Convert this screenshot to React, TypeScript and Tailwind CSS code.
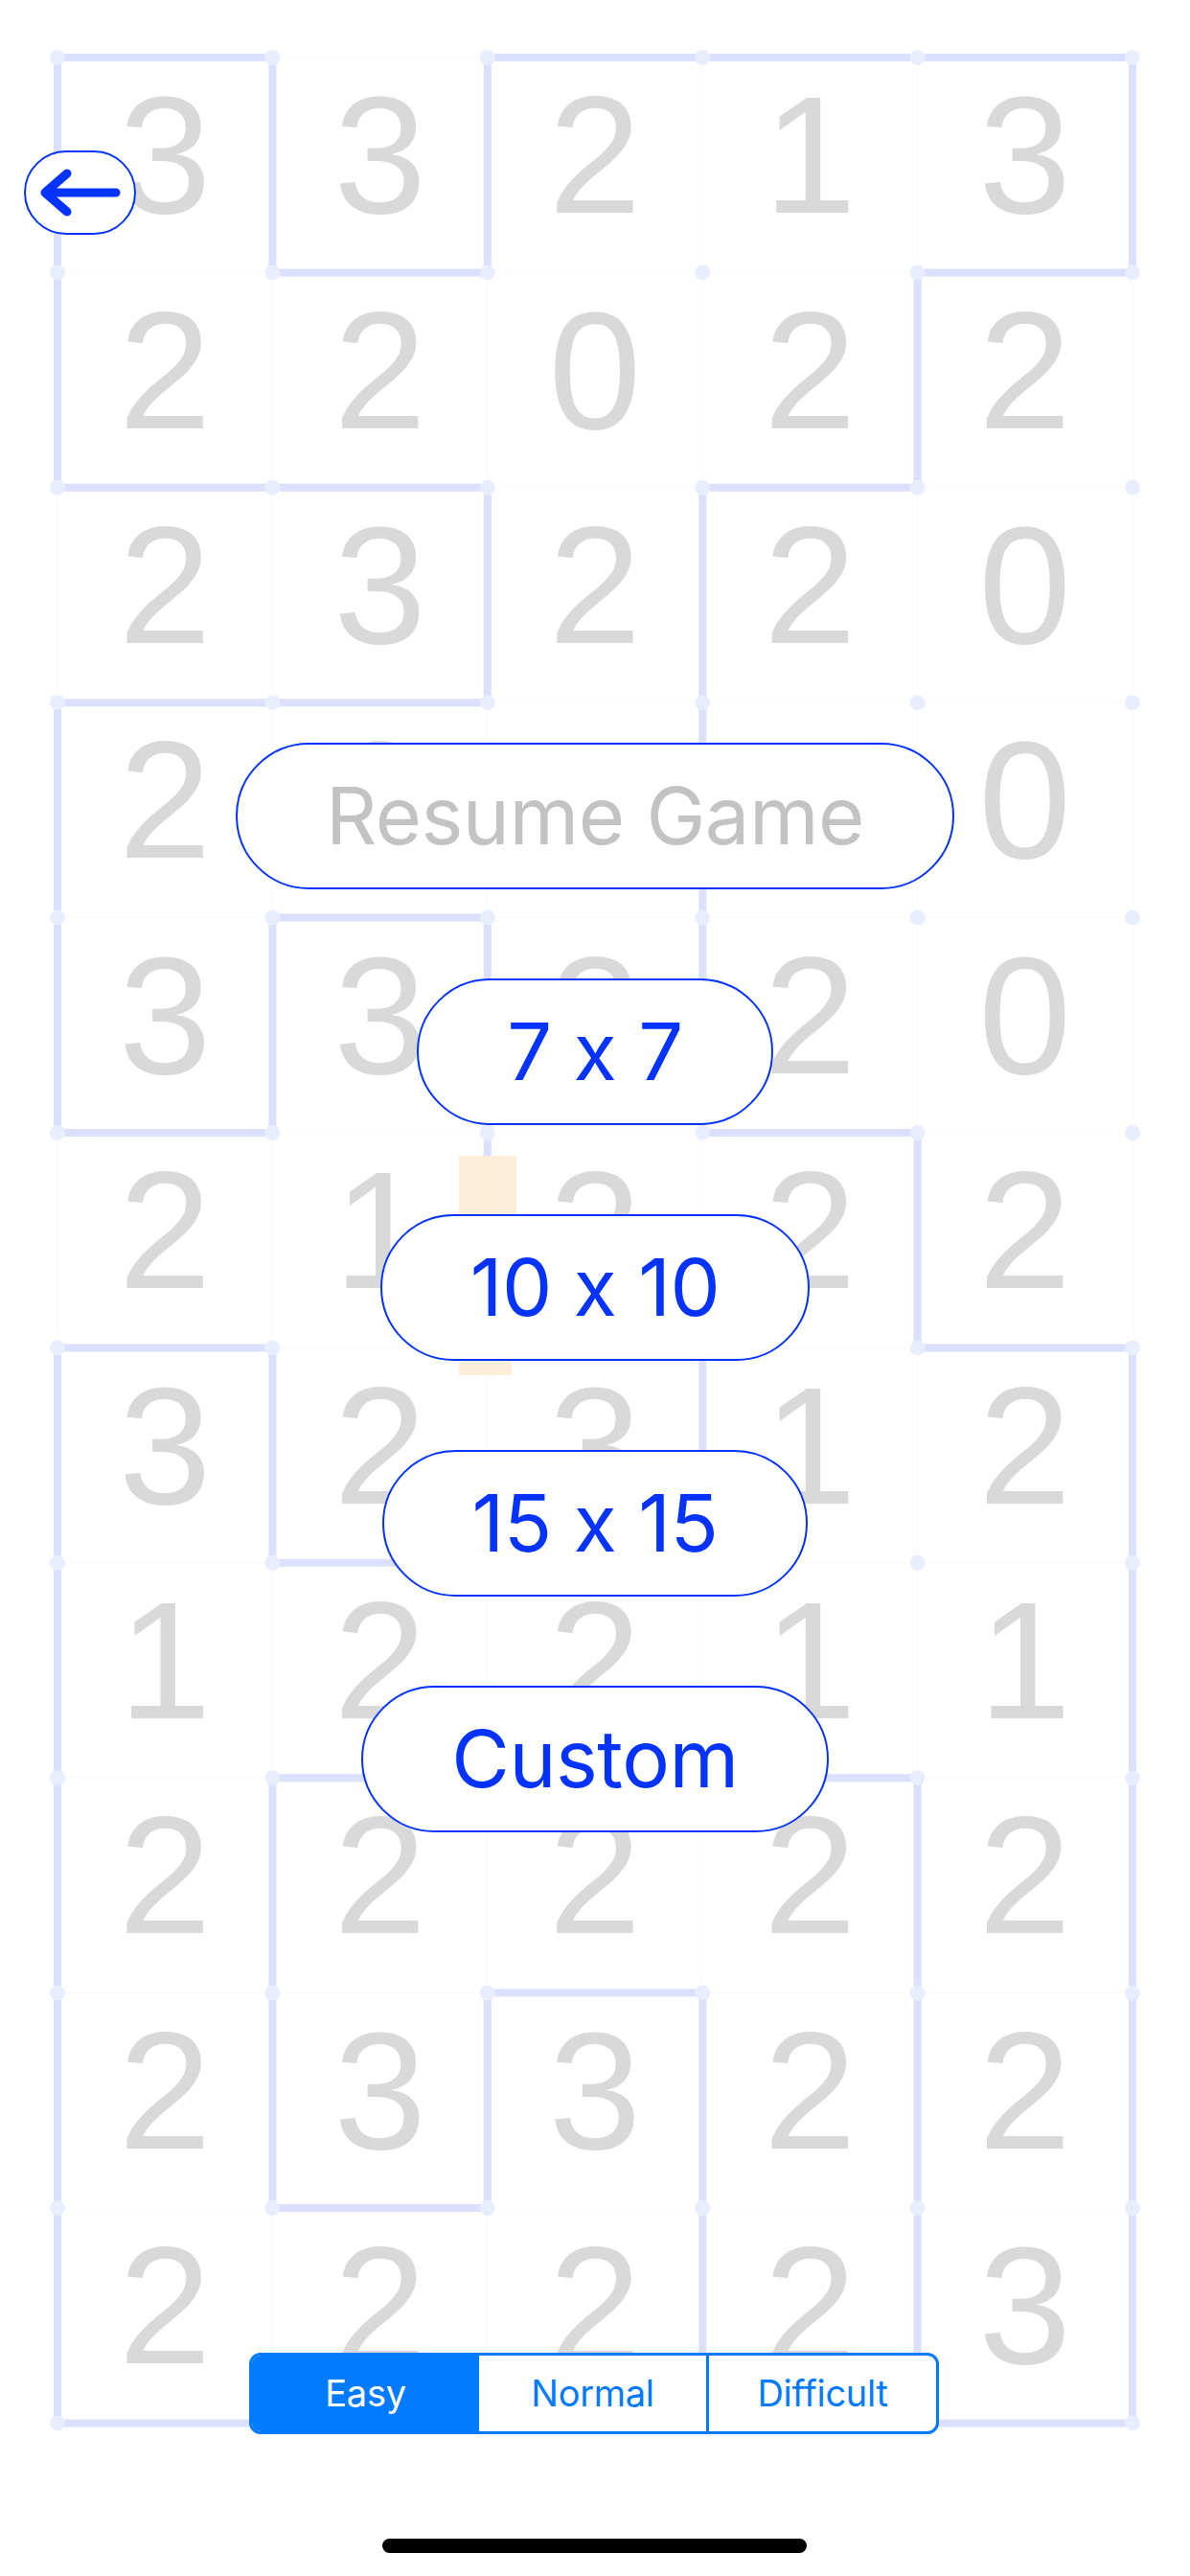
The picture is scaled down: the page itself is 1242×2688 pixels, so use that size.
import React from "react";

const S = 224.4;

const CLUES = [
  "33213",
  "22022",
  "23220",
  "22110",
  "33220",
  "21222",
  "32312",
  "12211",
  "22222",
  "23322",
  "22223",
];

// solved loop, as [col, row] vertices
const LOOP: [number, number][] = [
  [0, 0], [1, 0], [1, 1], [2, 1], [2, 0], [5, 0], [5, 1], [4, 1], [4, 2], [3, 2],
  [3, 5], [4, 5], [4, 6], [5, 6], [5, 11], [4, 11], [4, 8], [1, 8], [1, 10], [2, 10],
  [2, 9], [3, 9], [3, 11], [0, 11], [0, 6], [1, 6], [1, 7], [3, 7], [3, 6], [2, 6],
  [2, 4], [1, 4], [1, 5], [0, 5], [0, 3], [2, 3], [2, 2], [0, 2],
];

function BoardLines() {
  const cols = [0, 1, 2, 3, 4, 5];
  const rows = Array.from({ length: 12 }, (_, i) => i);
  const pts = LOOP.map(([c, r]) => `${c * S},${r * S}`).join(" ");
  return (
    <svg
      className="absolute left-0 top-0 overflow-visible"
      width={5 * S}
      height={11 * S}
      viewBox={`0 0 ${5 * S} ${11 * S}`}
    >
      {cols.map((c) => (
        <line key={"v" + c} x1={c * S} y1={0} x2={c * S} y2={11 * S} stroke="#fafafa" strokeWidth={1} />
      ))}
      {rows.map((r) => (
        <line key={"h" + r} x1={0} y1={r * S} x2={5 * S} y2={r * S} stroke="#fafafa" strokeWidth={1} />
      ))}
      <polygon points={pts} fill="none" stroke="#dae0fd" strokeWidth={8} strokeLinejoin="miter" />
      {rows.map((r) =>
        cols.map((c) => <ellipse key={`d${r}-${c}`} cx={c * S} cy={r * S} rx={8} ry={8} fill="#e8eefd" />)
      )}
      {/* highlighted edge */}
      <rect x={419} y={1146} width={60} height={170} fill="#feedd9" />
      <rect x={419} y={1316} width={55} height={59} fill="#feedd9" />
    </svg>
  );
}

function Board() {
  return (
    <div className="relative w-[1122px] h-[2468.4px]">
      <BoardLines />
      <div className="relative grid grid-cols-[repeat(5,224.4px)] grid-rows-[repeat(11,224.4px)]">
        {CLUES.map((row, r) =>
          row.split("").map((n, c) => (
            <div
              key={`${r}-${c}`}
              className="flex items-center justify-center pb-[20px] text-[174px] leading-none text-[#d9d9d9] font-['Liberation_Sans',sans-serif]"
            >
              {n}
            </div>
          ))
        )}
      </div>
    </div>
  );
}

function MenuButton({ label, muted }: { label: string; muted?: boolean }) {
  return (
    <button
      className={
        "h-[153px] px-[92px] rounded-full border-[2.5px] border-[#0433ff] bg-white text-[83px] leading-none tracking-[-0.5px] font-['Inter',sans-serif] [font-feature-settings:'calt'_0] " +
        (muted ? "text-[#c3c3c3]" : "text-[#0433ff]")
      }
    >
      {label}
    </button>
  );
}

export default function App() {
  return (
    <div className="relative w-[1242px] h-[2688px] bg-white overflow-hidden">
      <div className="pl-[60px] pt-[60px]">
        <Board />
      </div>

      {/* back */}
      <button className="absolute left-[25px] top-[157px] w-[117px] h-[88px] rounded-full border-[2.5px] border-[#0433ff] bg-white flex items-center justify-center">
        <svg width="86" height="52" viewBox="0 0 86 52" fill="none">
          <path
            d="M6 26 H80 M29 6 L6 26 L29 46"
            stroke="#0433ff"
            strokeWidth="9"
            strokeLinecap="round"
            strokeLinejoin="round"
          />
        </svg>
      </button>

      {/* menu */}
      <div className="absolute inset-x-0 top-[775px] flex flex-col items-center gap-[93px]">
        <MenuButton label="Resume Game" muted />
        <MenuButton label="7 x 7" />
        <MenuButton label="10 x 10" />
        <MenuButton label="15 x 15" />
        <MenuButton label="Custom" />
      </div>

      {/* difficulty */}
      <div className="absolute left-[260px] top-[2455px] w-[720px] h-[85px] flex rounded-[12px] border-[3px] border-[#007aff] overflow-hidden bg-white text-[38px] tracking-[-0.3px] font-['Inter',sans-serif]">
        <div className="flex-1 flex items-center justify-center bg-[#007aff] text-white">Easy</div>
        <div className="flex-1 flex items-center justify-center text-[#007aff]">Normal</div>
        <div className="flex-1 flex items-center justify-center border-l-[3px] border-[#007aff] text-[#007aff]">Difficult</div>
      </div>

      <div className="absolute left-[399px] top-[2649px] w-[443px] h-[15px] rounded-full bg-black" />
    </div>
  );
}
